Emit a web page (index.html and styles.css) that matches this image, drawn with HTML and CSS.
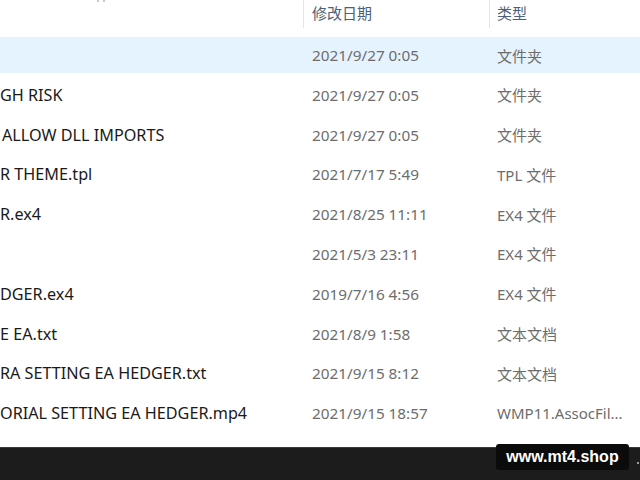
FILE: index.html
```html
<!DOCTYPE html>
<html lang="zh-CN">
<head>
<meta charset="utf-8">
<link rel="stylesheet" href="styles.css">
</head>
<body>
<div class="window">
  <div class="header">
    <div class="hcell name-h"><span class="sort-mark"></span></div>
    <div class="hcell date-h">修改日期</div>
    <div class="hcell type-h">类型</div>
  </div>
  <div class="list">
    <div class="row selected"><div class="c name"></div><div class="c date">2021/9/27 0:05</div><div class="c type">文件夹</div></div>
    <div class="row"><div class="c name">GH RISK</div><div class="c date">2021/9/27 0:05</div><div class="c type">文件夹</div></div>
    <div class="row"><div class="c name indent">ALLOW DLL IMPORTS</div><div class="c date">2021/9/27 0:05</div><div class="c type">文件夹</div></div>
    <div class="row"><div class="c name">R THEME.tpl</div><div class="c date">2021/7/17 5:49</div><div class="c type">TPL 文件</div></div>
    <div class="row"><div class="c name">R.ex4</div><div class="c date">2021/8/25 11:11</div><div class="c type">EX4 文件</div></div>
    <div class="row"><div class="c name"></div><div class="c date">2021/5/3 23:11</div><div class="c type">EX4 文件</div></div>
    <div class="row"><div class="c name">DGER.ex4</div><div class="c date">2019/7/16 4:56</div><div class="c type">EX4 文件</div></div>
    <div class="row"><div class="c name">E EA.txt</div><div class="c date">2021/8/9 1:58</div><div class="c type">文本文档</div></div>
    <div class="row"><div class="c name">RA SETTING EA HEDGER.txt</div><div class="c date">2021/9/15 8:12</div><div class="c type">文本文档</div></div>
    <div class="row"><div class="c name">ORIAL SETTING EA HEDGER.mp4</div><div class="c date">2021/9/15 18:57</div><div class="c type">WMP11.AssocFil...</div></div>
  </div>
  <div class="taskbar">
    <div class="badge">www.mt4.shop</div>
    <span class="dot"></span>
  </div>
</div>
</body>
</html>
```
FILE: styles.css
```css
* { box-sizing: border-box; }
html, body { margin: 0; padding: 0; background: #ffffff; }
body {
  width: 640px;
  height: 480px;
  overflow: hidden;
  font-family: "Noto Sans", "Noto Sans CJK SC", sans-serif;
  font-size: 15px;
}
.window {
  display: flex;
  flex-direction: column;
  height: 480px;
}
.header {
  display: grid;
  grid-template-columns: 303px 186px 1fr;
  height: 37px;
}
.hcell {
  height: 28px;
  line-height: 22px;
  padding-top: 2px;
  color: #4c607a;
  font-family: "Noto Sans CJK SC", sans-serif;
  font-size: 15px;
  position: relative;
}
.date-h, .type-h {
  border-left: 1px solid #e5e5e5;
}
.date-h { padding-left: 8px; }
.type-h { padding-left: 7px; }
.sort-mark {
  position: absolute;
  left: 97px;
  top: 0;
  width: 8px;
  height: 2px;
  border-left: 2px solid #c8c8c8;
  border-right: 2px solid #c8c8c8;
}
.list {
  flex: 1;
  display: flex;
  flex-direction: column;
  gap: 3.8px;
}
.row {
  display: grid;
  grid-template-columns: 303px 186px 1fr;
  height: 36px;
  align-items: center;
  white-space: nowrap;
}
.row.selected { background: #e5f3ff; }
.c { overflow: hidden; }
.name { color: #1a1a1a; font-size: 16.2px; }
.name.indent { padding-left: 2px; }
.date { color: #6d6d6d; padding-left: 9px; font-size: 15.3px; }
.type { color: #6d6d6d; padding-left: 8px; }
.taskbar {
  height: 33px;
  background: #1c1c1c;
  border-top: 1px solid #3a3a3a;
  position: relative;
}
.badge {
  position: absolute;
  left: 496px;
  top: -4px;
  width: 133px;
  height: 26px;
  background: #0b0b0b;
  border-radius: 3px;
  color: #ffffff;
  font-family: "Liberation Sans", Arial, sans-serif;
  font-weight: bold;
  font-size: 16px;
  display: flex;
  align-items: center;
  justify-content: center;
}
.dot {
  position: absolute;
  left: 637px;
  top: 14px;
  width: 2px;
  height: 2px;
  background: #9a9a9a;
}
```
